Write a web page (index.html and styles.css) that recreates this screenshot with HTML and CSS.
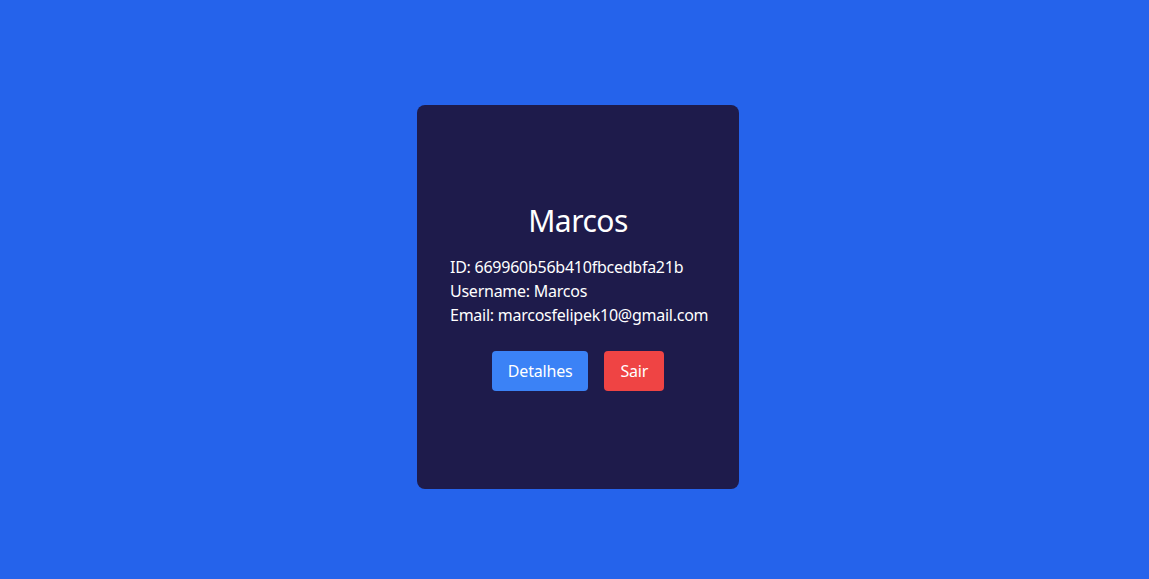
FILE: index.html
```html
<!DOCTYPE html>
<html lang="pt">
<head>
<meta charset="utf-8">
<title>Perfil</title>
<link rel="stylesheet" href="styles.css">
</head>
<body>
<main class="page">
  <section class="card">
    <h1 class="name">Marcos</h1>
    <div class="info">
      <p>ID: 669960b56b410fbcedbfa21b</p>
      <p>Username: Marcos</p>
      <p>Email: marcosfelipek10@gmail.com</p>
    </div>
    <div class="actions">
      <button class="btn btn-blue" type="button">Detalhes</button>
      <button class="btn btn-red" type="button">Sair</button>
    </div>
  </section>
</main>
</body>
</html>
```
FILE: styles.css
```css
* { box-sizing: border-box; }
html, body { margin: 0; padding: 0; }
body {
  background: #2563eb;
  font-family: "Noto Sans", "Open Sans", sans-serif;
  color: #fff;
}
.page {
  min-height: 579px;
  display: flex;
  align-items: center;
  justify-content: center;
  padding: 15px 0 0 7px;
}
.card {
  width: 322px;
  height: 384px;
  background: #1e1b4b;
  border-radius: 8px;
  padding: 32px 33px;
  display: flex;
  flex-direction: column;
  justify-content: center;
}
.name {
  margin: 0 0 16px;
  font-size: 30px;
  line-height: 36px;
  font-weight: 400;
  letter-spacing: -0.5px;
  text-align: center;
}
.info p {
  margin: 0;
  font-size: 16px;
  line-height: 24px;
  letter-spacing: -0.25px;
  white-space: nowrap;
}
.actions {
  margin-top: 24px;
  display: flex;
  justify-content: center;
  gap: 16px;
}
.btn {
  font-family: inherit;
  font-size: 16px;
  line-height: 24px;
  letter-spacing: -0.2px;
  color: #fff;
  border: 0;
  border-radius: 4px;
  padding: 8px 16px;
  cursor: pointer;
}
.btn-blue { background: #3b82f6; }
.btn-red { background: #ef4444; }
```
